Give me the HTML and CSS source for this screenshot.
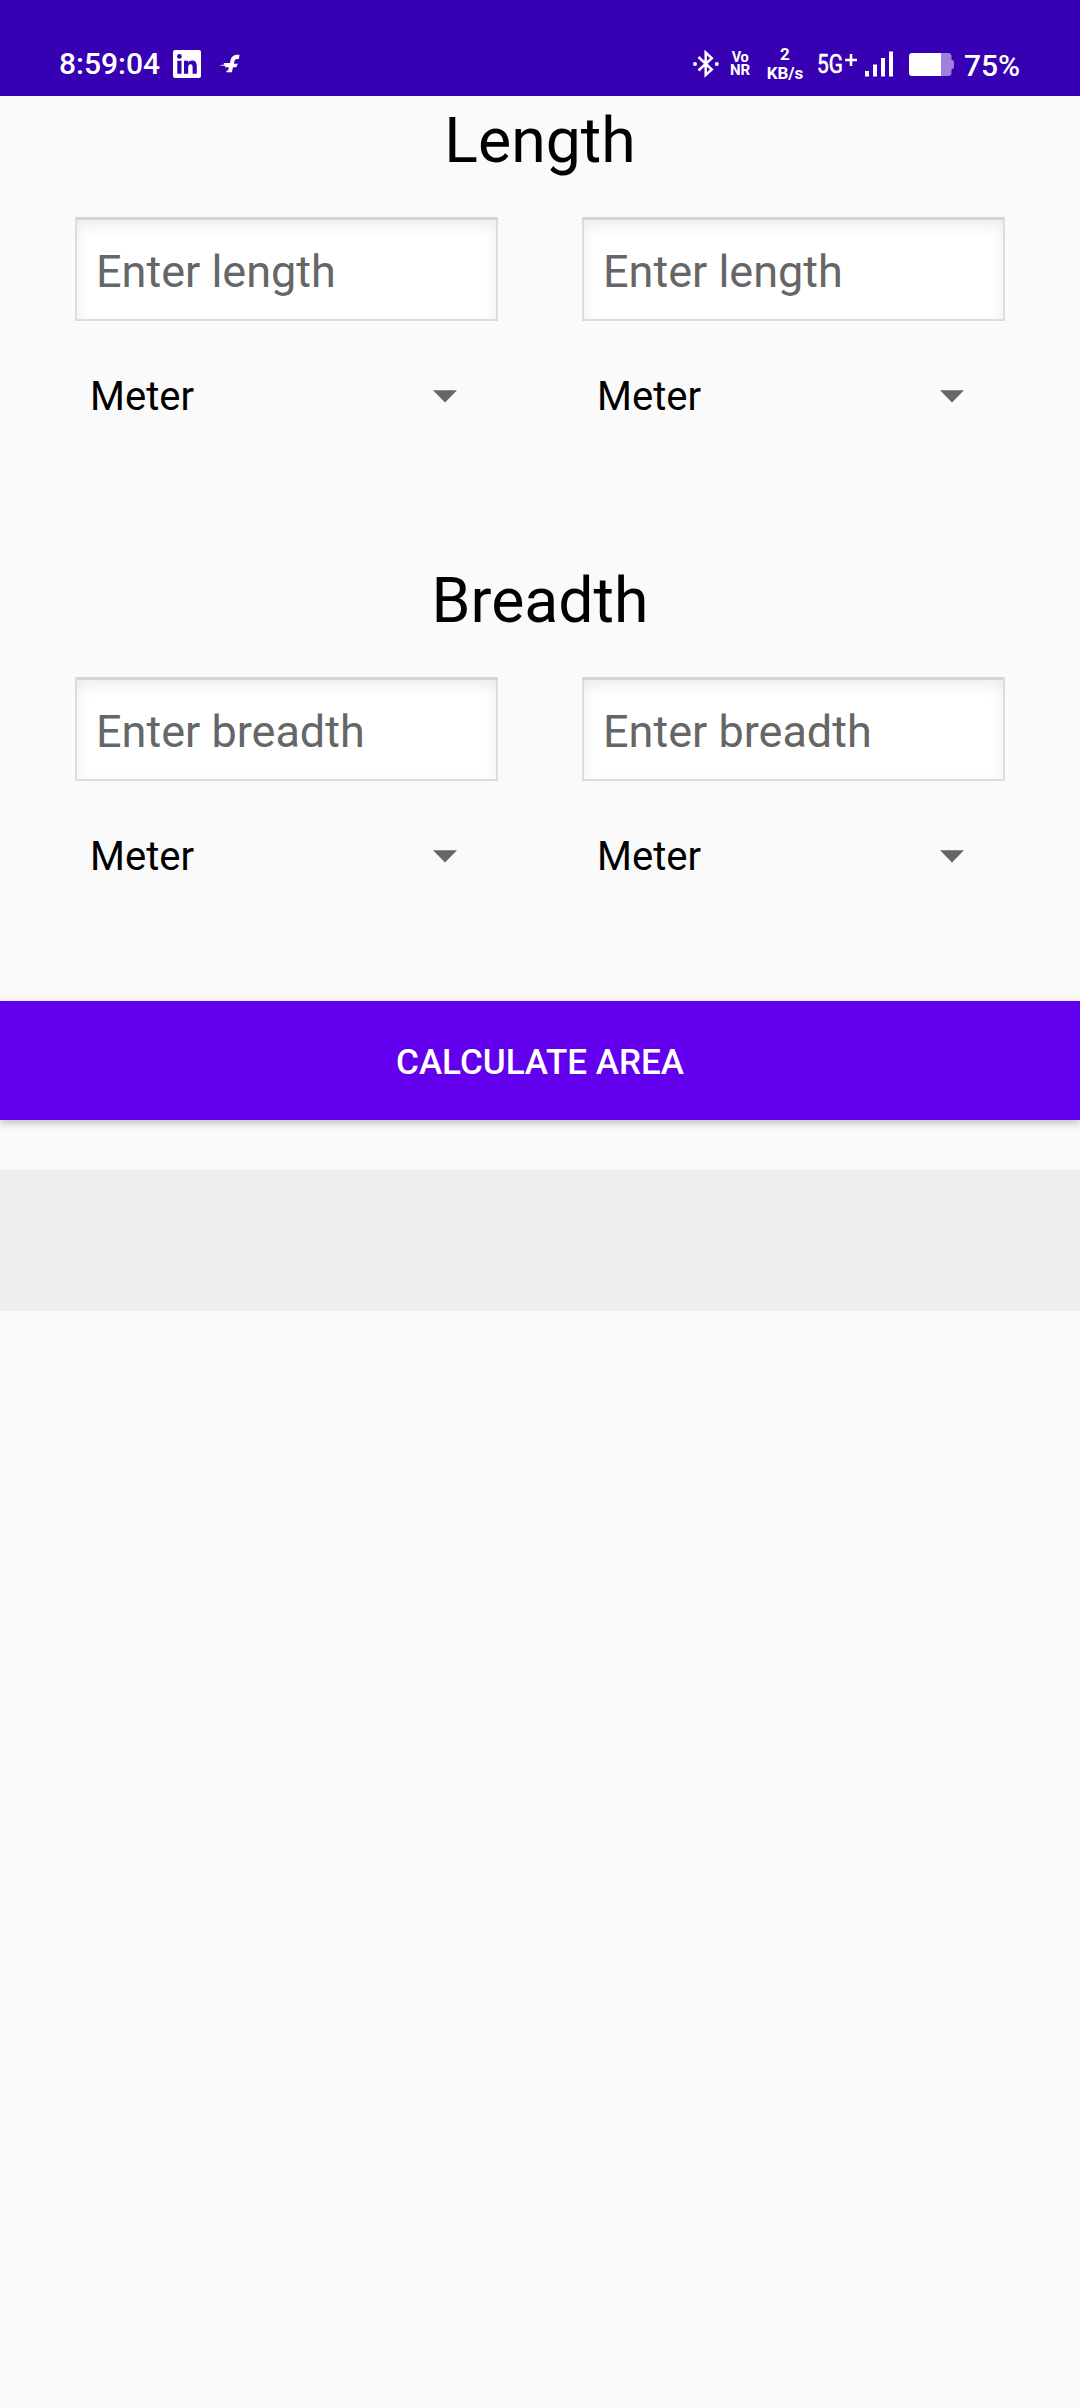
FILE: index.html
```html
<!DOCTYPE html>
<html lang="en">
<head>
<meta charset="utf-8">
<title>Area Calculator</title>
<link rel="stylesheet" href="styles.css">
</head>
<body>
<header class="status">
  <span class="clock">8:59:04</span>
  <svg class="linkedin" width="28" height="28" viewBox="0 0 28 28"><rect width="28" height="28" rx="2" fill="#fff"/><g fill="#3700b3"><circle cx="6.4" cy="6.4" r="2.4"/><path d="M4.3 10.8h4.2v12.9H4.3zM11 10.8h4v1.8c.8-1.3 2.2-2.1 4-2.1 4 0 4.8 2.6 4.8 6.1v7.1h-4.2v-6.3c0-1.6-.2-3.2-2.1-3.2s-2.3 1.5-2.3 3.1v6.4H11z"/></g></svg>
  <svg class="bird" width="22" height="20" viewBox="0 0 22 20"><path d="M20.500 1C14.500.3 12.300 2.500 11.300 7.500L10.900 9H4.500l1 1.400L0 11.200l6.500.9-1 1.100h4.300l-.6 3.300H7.500v1.700h5.400l1.100-5h3.300l1.500-3.400h-3.900l.4-2c.5-2.200 1.400-3 3.300-2.700h1.200z" fill="#fff"/></svg>
  <svg class="bt" width="26" height="28" viewBox="0 0 26 28"><path d="M5.500 7 18.800 19.500 12.700 25V2.500l6.100 5.700L5.500 20.500" fill="none" stroke="#fff" stroke-width="2.500"/><circle cx="2" cy="14" r="2" fill="#fff"/><circle cx="23.800" cy="14" r="2" fill="#fff"/></svg>
  <span class="vonr"><span class="vo">Vo</span><span>NR</span></span>
  <span class="rate"><span>2</span><span>KB/s</span></span>
  <span class="net"><span class="gen">5G</span></span>
  <svg class="plus" width="12" height="12" viewBox="0 0 12 12"><path d="M6 0v12M0 6h12" stroke="#fff" stroke-width="2.600"/></svg>
  <svg class="bars" width="28" height="26" viewBox="0 0 28 26"><path d="M0 20h4v5.500H0zM8 13.500h4v12H8zM16 7h4v18.500h-4zM24 .5h4v25h-4z" fill="#fff"/></svg>
  <svg class="battery" width="45" height="23" viewBox="0 0 45 23"><path d="M32 0h7q3.500 0 3.500 3.500V7h.5q2 0 2 2v5q0 2-2 2h-.5v3.500Q42.500 23 39 23h-7z" fill="#9f80da"/><path d="M3 0h29v23H3q-3 0-3-3V3q0-3 3-3z" fill="#fff"/></svg>
  <span class="percent">75%</span>
</header>
<main>
  <section class="dimension">
    <h2>Length</h2>
    <div class="columns">
      <div class="field"><input class="entry" type="text" placeholder="Enter length"><div class="unit"><span>Meter</span><svg width="24" height="13" viewBox="0 0 24 13"><path d="M0 .3h24L12 12.500z" fill="#666"/></svg></div></div>
      <div class="field"><input class="entry" type="text" placeholder="Enter length"><div class="unit"><span>Meter</span><svg width="24" height="13" viewBox="0 0 24 13"><path d="M0 .3h24L12 12.500z" fill="#666"/></svg></div></div>
    </div>
  </section>
  <section class="dimension">
    <h2>Breadth</h2>
    <div class="columns">
      <div class="field"><input class="entry" type="text" placeholder="Enter breadth"><div class="unit"><span>Meter</span><svg width="24" height="13" viewBox="0 0 24 13"><path d="M0 .3h24L12 12.500z" fill="#666"/></svg></div></div>
      <div class="field"><input class="entry" type="text" placeholder="Enter breadth"><div class="unit"><span>Meter</span><svg width="24" height="13" viewBox="0 0 24 13"><path d="M0 .3h24L12 12.500z" fill="#666"/></svg></div></div>
    </div>
  </section>
  <button class="calculate">CALCULATE AREA</button>
  <div class="result"></div>
</main>
</body>
</html>
```
FILE: styles.css
```css
* { box-sizing: border-box; }
body {
  margin: 0;
  min-height: 2408px;
  background: #fafafa;
  color: #000;
  font-family: Roboto, sans-serif;
  overflow-x: hidden;
}
svg { display: block; flex: none; }

.status {
  display: flex;
  align-items: flex-start;
  height: 96px;
  padding-left: 59px;
  background: #3700b3;
  color: #fff;
  white-space: nowrap;
}
.clock, .percent { font-size: 30px; line-height: 36px; font-weight: 500; }
.clock { width: 114px; margin-top: 46px; }
.linkedin { margin-top: 50px; }
.bird { margin: 54px 0 0 18px; }
.bt { margin: 50px 0 0 452px; }
.vonr, .rate { display: flex; flex-direction: column; align-items: center; font-weight: 700; }
.vonr { width: 20px; margin: 51px 0 0 11px; font-size: 15px; line-height: 13px; font-weight: 700; }
.vo { font-size: 14.500px; letter-spacing: -.5px; }
.rate { width: 36px; margin: 45px 0 0 17px; font-size: 17px; line-height: 19px; }
.net { width: 28px; margin: 48px 0 0 14px; font-size: 26px; line-height: 32px; }
.gen { display: inline-block; transform: scaleX(.8); transform-origin: left; -webkit-text-stroke: .6px #fff; }
.plus { margin-top: 54px; }
.bars { margin: 51px 0 0 8px; }
.battery { margin: 53px 0 0 16px; }
.percent { margin: 48px 0 0 10px; }

.dimension { height: 460px; }
.dimension h2 {
  margin: 0 0 32px;
  font-size: 62.500px;
  line-height: 89px;
  font-weight: 400;
  text-align: center;
}
.columns {
  display: grid;
  grid-template-columns: 1fr 1fr;
  gap: 84px;
  padding: 0 75px;
}
.entry {
  display: block;
  width: 100%;
  height: 104px;
  padding: 4px 18px 0 19px;
  border: 2px solid #dcdcdc;
  border-top: 3px solid #d4d4d4;
  border-radius: 0;
  background: #fff;
  box-shadow: inset 0 6px 16px -2px rgba(0, 0, 0, .09);
  font: 45px Roboto, sans-serif;
  outline: none;
}
.entry::placeholder { color: #666; opacity: 1; }
.unit {
  display: flex;
  align-items: center;
  justify-content: space-between;
  height: 60px;
  margin-top: 45px;
  padding: 0 41px 0 15px;
  font-size: 40px;
}
.calculate {
  display: block;
  width: 100%;
  height: 119px;
  margin: -15px 0 50px;
  padding: 3px 0 0;
  border: 0;
  background: #6200ee;
  box-shadow: 0 3px 8px rgba(0, 0, 0, .24);
  color: #fff;
  font: 500 35px Roboto, sans-serif;
}
.result { height: 141px; background: #eee; }
```
